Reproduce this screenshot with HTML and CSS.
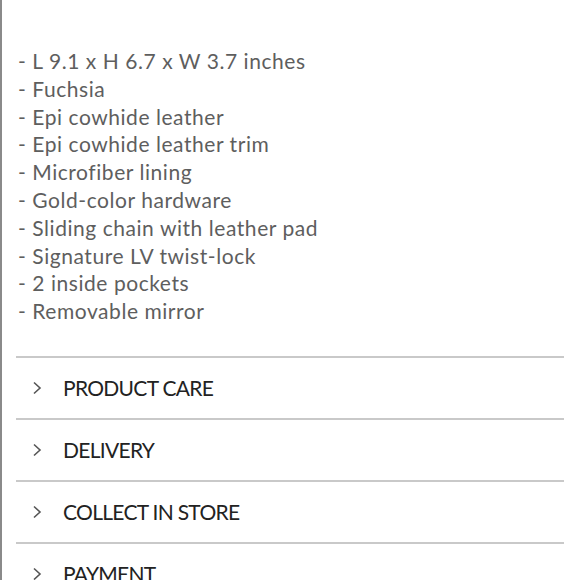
FILE: index.html
```html
<!DOCTYPE html>
<html lang="en">
<head>
    <meta charset="UTF-8">
    <meta name="viewport" content="width=device-width, initial-scale=1.0">
    <title>Product Details</title>
    <link rel="stylesheet" href="styles.css">
</head>
<body>
    <div class="page">
        <ul class="specs">
            <li>- L 9.1 x H 6.7 x W 3.7 inches</li>
            <li>- Fuchsia</li>
            <li>- Epi cowhide leather</li>
            <li>- Epi cowhide leather trim</li>
            <li>- Microfiber lining</li>
            <li>- Gold-color hardware</li>
            <li>- Sliding chain with leather pad</li>
            <li>- Signature LV twist-lock</li>
            <li>- 2 inside pockets</li>
            <li>- Removable mirror</li>
        </ul>

        <div class="accordion">
            <div class="accordion-item">
                <svg class="chevron" viewBox="0 0 10 14"><path d="M2 1.5 L8 7 L2 12.5"/></svg>
                <span>PRODUCT CARE</span>
            </div>
            <div class="accordion-item">
                <svg class="chevron" viewBox="0 0 10 14"><path d="M2 1.5 L8 7 L2 12.5"/></svg>
                <span>DELIVERY</span>
            </div>
            <div class="accordion-item">
                <svg class="chevron" viewBox="0 0 10 14"><path d="M2 1.5 L8 7 L2 12.5"/></svg>
                <span>COLLECT IN STORE</span>
            </div>
            <div class="accordion-item">
                <svg class="chevron" viewBox="0 0 10 14"><path d="M2 1.5 L8 7 L2 12.5"/></svg>
                <span>PAYMENT</span>
            </div>
        </div>
    </div>
</body>
</html>
```

FILE: styles.css
```css
* {
    box-sizing: border-box;
    margin: 0;
    padding: 0;
}

body {
    background: #fff;
    font-family: 'Lato', 'Noto Sans', sans-serif;
    height: 580px;
    overflow: hidden;
}

.page {
    min-height: 580px;
    border-left: 2px solid #8a8a8a;
    padding: 47px 16px 0 14px;
}

.specs {
    list-style: none;
    padding-left: 2px;
    color: #5e5e5e;
    font-size: 21px;
    line-height: 27.8px;
    letter-spacing: 0.55px;
}

.accordion {
    margin-top: 31px;
}

.accordion-item {
    display: flex;
    align-items: center;
    height: 62px;
    border-top: 2px solid #c9c9c9;
    padding-left: 16px;
    color: #222;
    font-size: 21px;
    letter-spacing: -0.7px;
}

.chevron {
    width: 10px;
    height: 14px;
    margin-right: 21px;
    fill: none;
    stroke: #555;
    stroke-width: 1.6;
}
```
